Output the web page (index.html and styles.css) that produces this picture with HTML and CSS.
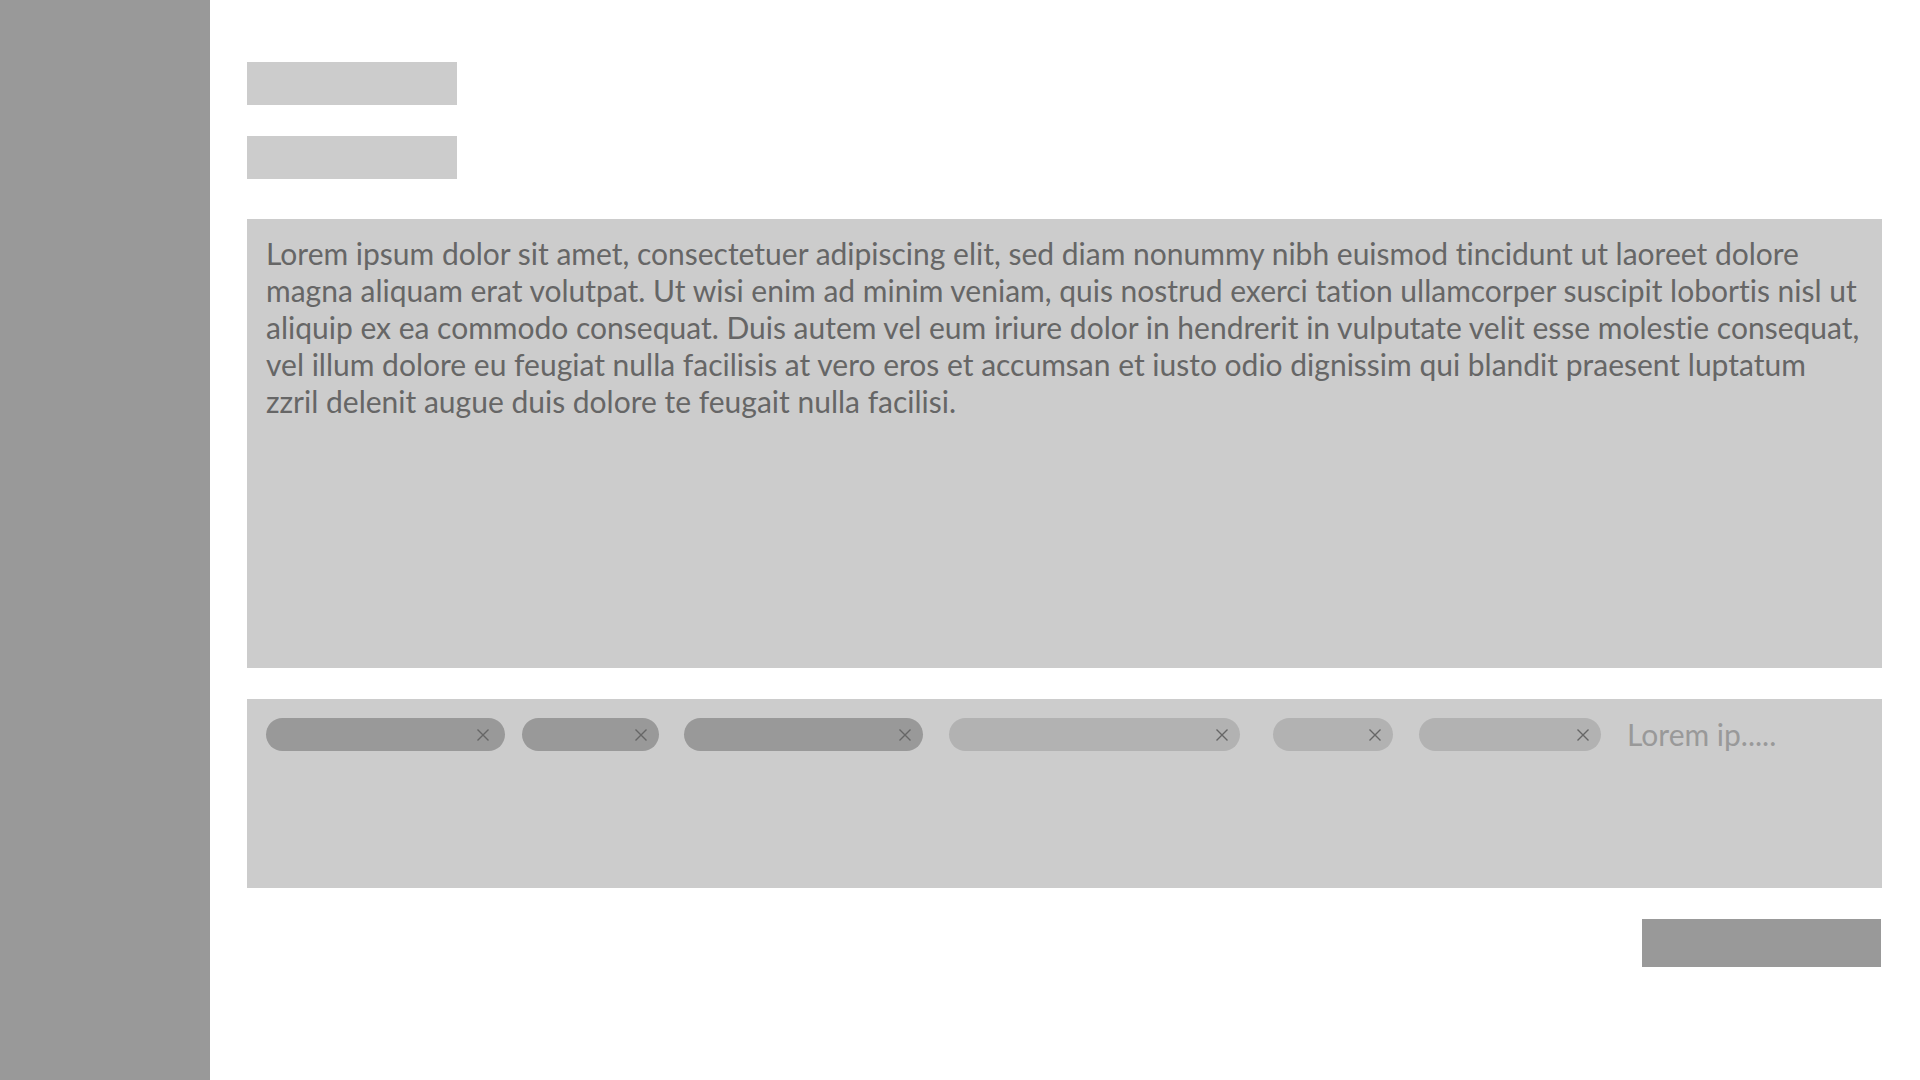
FILE: index.html
```html
<!DOCTYPE html>
<html lang="en">
<head>
<meta charset="utf-8">
<title>Editor</title>
<meta name="viewport" content="width=device-width, initial-scale=1">
<link rel="stylesheet" href="styles.css">
</head>
<body>
<svg class="symbols" aria-hidden="true">
  <symbol id="cross" viewBox="0 0 12 12"><path d="M0.5 0.5 11.5 11.5M11.5 0.5 0.5 11.5"/></symbol>
</svg>
<div class="app">
  <aside class="sidebar"></aside>
  <main class="content">
    <form class="editor">
      <div class="fields">
        <input class="field" type="text" aria-label="Title">
        <input class="field" type="text" aria-label="Category">
      </div>
      <textarea class="body-text" aria-label="Text" spellcheck="false">Lorem ipsum dolor sit amet, consectetuer adipiscing elit, sed diam nonummy nibh euismod tincidunt ut laoreet dolore
magna aliquam erat volutpat. Ut wisi enim ad minim veniam, quis nostrud exerci tation ullamcorper suscipit lobortis nisl ut
aliquip ex ea commodo consequat. Duis autem vel eum iriure dolor in hendrerit in vulputate velit esse molestie consequat,
vel illum dolore eu feugiat nulla facilisis at vero eros et accumsan et iusto odio dignissim qui blandit praesent luptatum
zzril delenit augue duis dolore te feugait nulla facilisi.</textarea>
      <div class="tags">
        <div class="tag tag-long tag-near"><button class="remove" type="button" aria-label="Remove tag"><svg class="icon"><use href="#cross"/></svg></button></div>
        <div class="tag tag-short"><button class="remove" type="button" aria-label="Remove tag"><svg class="icon"><use href="#cross"/></svg></button></div>
        <div class="tag tag-long"><button class="remove" type="button" aria-label="Remove tag"><svg class="icon"><use href="#cross"/></svg></button></div>
        <div class="tag tag-light tag-longest tag-far"><button class="remove" type="button" aria-label="Remove tag"><svg class="icon"><use href="#cross"/></svg></button></div>
        <div class="tag tag-light tag-shortest"><button class="remove" type="button" aria-label="Remove tag"><svg class="icon"><use href="#cross"/></svg></button></div>
        <div class="tag tag-light tag-medium"><button class="remove" type="button" aria-label="Remove tag"><svg class="icon"><use href="#cross"/></svg></button></div>
        <input class="tag-input" type="text" aria-label="Add a tag" value="Lorem ip.....">
      </div>
      <button class="submit" type="submit" aria-label="Save"></button>
    </form>
  </main>
</div>
</body>
</html>
```
FILE: styles.css
```css
* {
  box-sizing: border-box;
}

body {
  margin: 0;
  background: #fff;
  color: #666;
  font-family: Lato, "Open Sans", sans-serif;
  font-variant-ligatures: none;
}

input,
textarea,
button {
  margin: 0;
  border: 0;
  border-radius: 0;
  padding: 0;
  outline: 0;
  color: inherit;
  font-family: inherit;
  font-variant-ligatures: none;
}

.symbols {
  display: none;
}

.app {
  display: flex;
  min-height: 100vh;
}

.sidebar {
  flex: 0 0 210px;
  background: #999;
}

.content {
  flex: 1;
  min-width: 0;
  padding: 62px 38px 62px 37px;
}

.editor {
  display: flex;
  flex-direction: column;
  gap: 31px;
}

.fields {
  display: flex;
  flex-direction: column;
  align-items: flex-start;
  gap: 31px;
  padding-bottom: 9px;
}

.field {
  width: 210px;
  height: 43px;
  padding: 0 19px;
  background: #ccc;
}

.body-text {
  display: block;
  width: 100%;
  height: 449px;
  padding: 16px 8px 16px 19px;
  background: #ccc;
  font-size: 30px;
  line-height: 37px;
  resize: none;
}

.tags {
  display: flex;
  flex-wrap: wrap;
  align-items: center;
  align-content: flex-start;
  column-gap: 17px;
  row-gap: 16px;
  min-height: 189px;
  padding: 17px 19px;
  background: #ccc;
}

.tag {
  display: flex;
  align-items: center;
  justify-content: flex-end;
  height: 33px;
  margin-right: 9px;
  padding-right: 12px;
  border-radius: 17px;
  background: #999;
}

.tag-light {
  background: #b2b2b2;
}

.tag-near {
  margin-right: 0;
  padding-right: 16px;
}

.tag-far {
  margin-right: 16px;
}

.tag-short {
  width: 137px;
  margin-right: 8px;
}

.tag-shortest { width: 120px; }
.tag-medium { width: 182px; }
.tag-long { width: 239px; }
.tag-longest { width: 291px; }

.remove {
  display: flex;
  background: none;
  cursor: pointer;
}

.icon {
  width: 12px;
  height: 12px;
  fill: none;
  stroke: #666;
  stroke-width: 1.4;
}

.tag-input {
  flex: 1;
  min-width: 160px;
  height: 37px;
  background: none;
  color: #999;
  font-size: 30px;
  line-height: 37px;
}

.submit {
  align-self: flex-end;
  width: 239px;
  height: 48px;
  margin-right: 1px;
  background: #999;
  cursor: pointer;
}
```
